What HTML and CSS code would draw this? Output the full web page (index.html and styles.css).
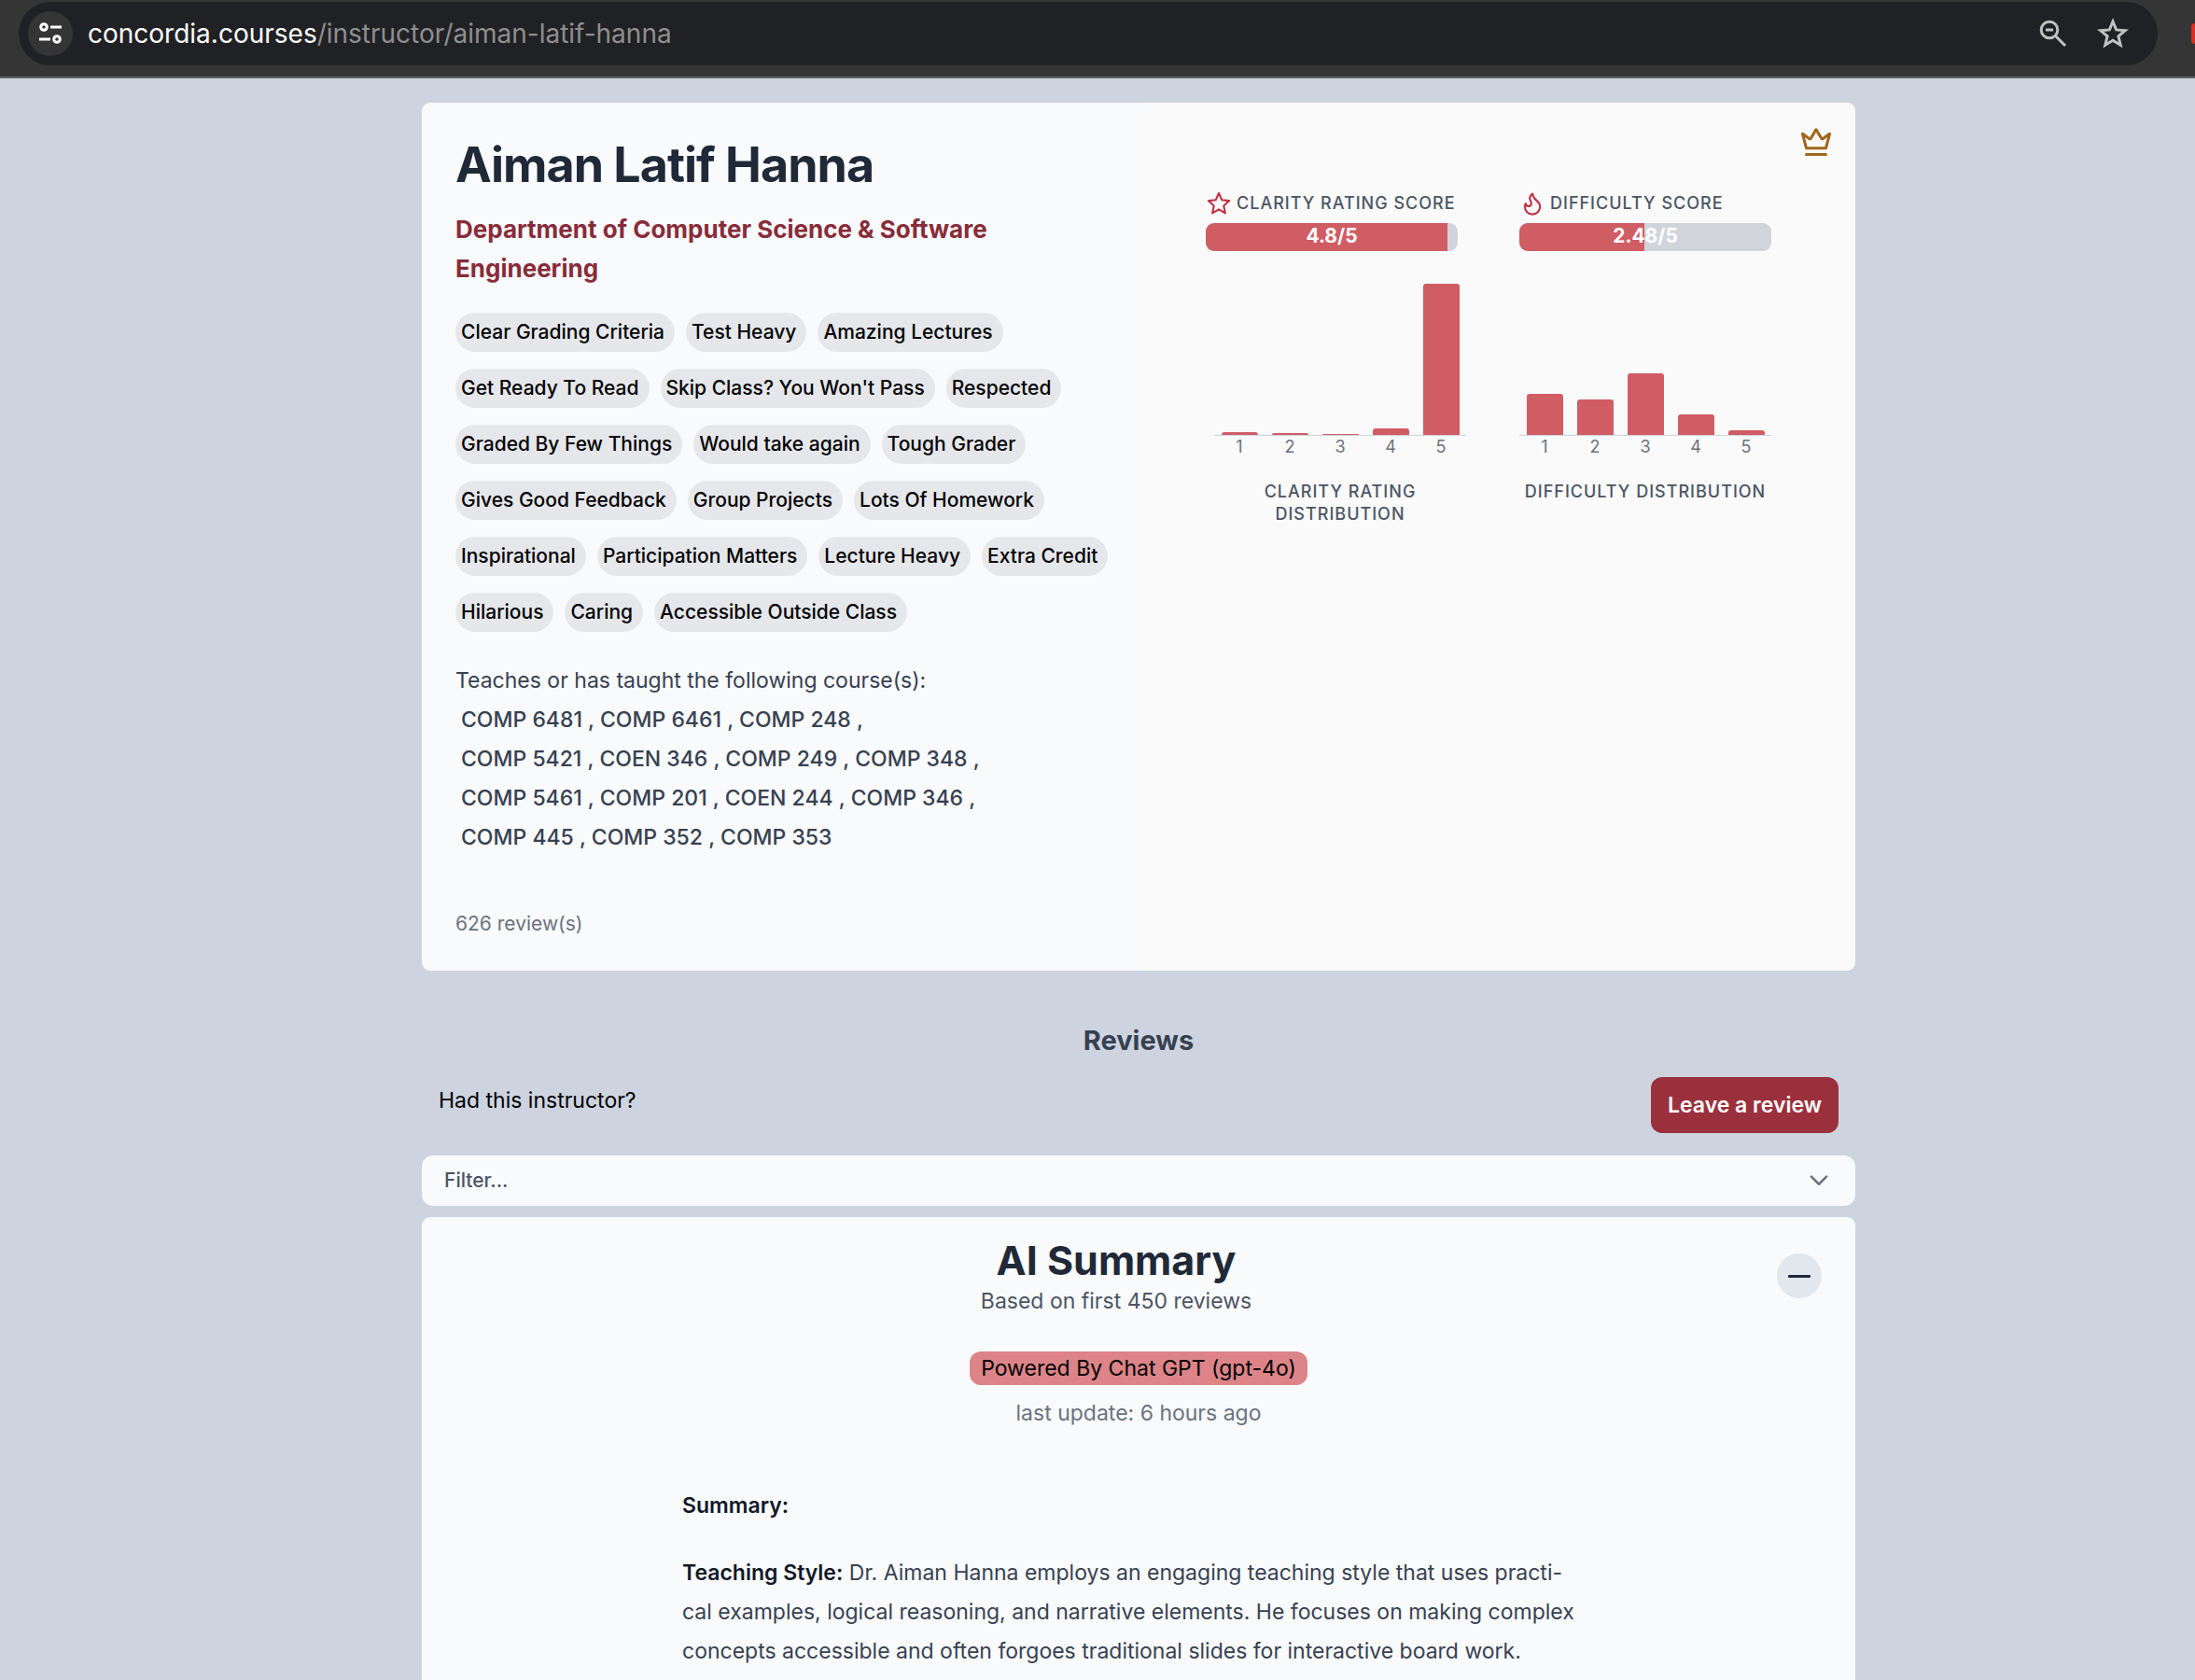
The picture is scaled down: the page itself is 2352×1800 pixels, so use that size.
FILE: index.html
```html
<!DOCTYPE html>
<html lang="en">
<head>
<meta charset="utf-8">
<title>Aiman Latif Hanna - concordia.courses</title>
<link rel="stylesheet" href="styles.css">
</head>
<body>
<header class="toolbar">
  <div class="omnibox">
    <button class="site-info" type="button" aria-label="Site information">
      <svg width="28" height="28" viewBox="0 0 28 28" fill="none" stroke="#fff" stroke-width="3"><circle cx="7" cy="7" r="3.3"/><path d="M14 7h12M2 20h12"/><circle cx="21" cy="20" r="3.3"/></svg>
    </button>
    <p class="url"><span class="url-host">concordia.courses</span>/instructor/aiman-latif-hanna</p>
    <button class="tool" type="button" aria-label="Zoom">
      <svg width="36" height="36" viewBox="0 0 36 36" fill="none" stroke="#c0c0c0" stroke-width="3"><circle cx="14" cy="14" r="8.8"/><path d="M20 20l11 11M10 14h8"/></svg>
    </button>
    <button class="tool" type="button" aria-label="Bookmark this page">
      <svg width="36" height="36" viewBox="0 0 36 36" fill="none" stroke="#c0c0c0" stroke-width="3"><path d="M18 5l3.6 8.9 9.6.8-7.3 6.2 2.3 9.3-8.2-5-8.2 5 2.3-9.3-7.3-6.2 9.6-.8z"/></svg>
    </button>
  </div>
  <div class="extension"></div>
</header>

<main class="page">
  <section class="card profile">
    <div class="about">
      <h1 class="name">Aiman Latif Hanna</h1>
      <p class="department">Department of Computer Science &amp; Software Engineering</p>
      <ul class="tags">
        <li>Clear Grading Criteria</li>
        <li>Test Heavy</li>
        <li>Amazing Lectures</li>
        <li>Get Ready To Read</li>
        <li>Skip Class? You Won't Pass</li>
        <li>Respected</li>
        <li>Graded By Few Things</li>
        <li>Would take again</li>
        <li>Tough Grader</li>
        <li>Gives Good Feedback</li>
        <li>Group Projects</li>
        <li>Lots Of Homework</li>
        <li>Inspirational</li>
        <li>Participation Matters</li>
        <li>Lecture Heavy</li>
        <li>Extra Credit</li>
        <li>Hilarious</li>
        <li>Caring</li>
        <li>Accessible Outside Class</li>
      </ul>
      <div class="courses">
        <p>Teaches or has taught the following course(s):</p>
        <p class="course-line"><a href="#">COMP 6481</a> , <a href="#">COMP 6461</a> , <a href="#">COMP 248</a> ,</p>
        <p class="course-line"><a href="#">COMP 5421</a> , <a href="#">COEN 346</a> , <a href="#">COMP 249</a> , <a href="#">COMP 348</a> ,</p>
        <p class="course-line"><a href="#">COMP 5461</a> , <a href="#">COMP 201</a> , <a href="#">COEN 244</a> , <a href="#">COMP 346</a> ,</p>
        <p class="course-line"><a href="#">COMP 445</a> , <a href="#">COMP 352</a> , <a href="#">COMP 353</a></p>
      </div>
      <p class="count">626 review(s)</p>
    </div>
    <div class="stats">
      <div class="crown">
        <svg width="36" height="36" viewBox="0 0 24 24" fill="none" stroke="#a1661c" stroke-width="2" stroke-linecap="round" stroke-linejoin="round"><path d="M2.300 6.200l4.700 3.500q.8.500 1.300-.300L12 3.200l3.700 6.200q.5.800 1.300.300l4.700-3.500L19 16.500H5z"/><path d="M5 21h14"/></svg>
      </div>
      <div class="metrics">
        <div class="metric">
          <h2 class="label"><svg width="28" height="28" viewBox="0 0 24 24" fill="none" stroke="#be3144" stroke-width="1.800" stroke-linejoin="round"><path d="M12 2.500l2.800 6.300 6.800.7-5.100 4.600 1.400 6.800L12 17.400l-5.900 3.500 1.400-6.800-5.100-4.600 6.800-.7z"/></svg>Clarity Rating Score</h2>
          <div class="meter"><div class="fill" style="width:96%"></div><span class="value">4.8/5</span></div>
          <div class="chart shifted">
            <div class="bars">
              <div class="bar" style="height:3px"></div><div class="bar" style="height:2px"></div><div class="bar" style="height:1px"></div><div class="bar" style="height:7px"></div><div class="bar" style="height:162px"></div>
            </div>
            <div class="ticks"><span>1</span><span>2</span><span>3</span><span>4</span><span>5</span></div>
            <p class="caption">Clarity Rating Distribution</p>
          </div>
        </div>
        <div class="metric">
          <h2 class="label"><svg width="28" height="28" viewBox="0 0 24 24" fill="none" stroke="#be3144" stroke-width="1.800" stroke-linecap="round" stroke-linejoin="round"><path d="M8.500 14.500A2.500 2.500 0 0 0 11 12c0-1.380-.5-2-1-3-1.072-2.143-.224-4.054 2-6 .5 2.500 2 4.900 4 6.500 2 1.600 3 3.500 3 5.500a7 7 0 1 1-14 0c0-1.153.433-2.294 1-3a2.500 2.500 0 0 0 2.500 2.500z"/></svg>Difficulty Score</h2>
          <div class="meter"><div class="fill" style="width:49.6%"></div><span class="value">2.48/5</span></div>
          <div class="chart">
            <div class="bars">
              <div class="bar" style="height:44px"></div><div class="bar" style="height:38px"></div><div class="bar" style="height:66px"></div><div class="bar" style="height:22px"></div><div class="bar" style="height:5px"></div>
            </div>
            <div class="ticks"><span>1</span><span>2</span><span>3</span><span>4</span><span>5</span></div>
            <p class="caption">Difficulty Distribution</p>
          </div>
        </div>
      </div>
    </div>
  </section>

  <h2 class="reviews-title">Reviews</h2>
  <div class="prompt">
    <p>Had this instructor?</p>
    <button class="leave" type="button">Leave a review</button>
  </div>
  <button class="filter" type="button">Filter...
    <svg width="30" height="30" viewBox="0 0 24 24" fill="none" stroke="#6b7280" stroke-width="2" stroke-linecap="round" stroke-linejoin="round"><path d="M5.500 8.500l6.500 6.500 6.500-6.500"/></svg>
  </button>

  <section class="card summary">
    <div class="summary-head">
      <div class="summary-title">
        <h2>AI Summary</h2>
        <p>Based on first 450 reviews</p>
      </div>
      <button class="collapse" type="button" aria-label="Collapse summary">
        <svg width="24" height="3" viewBox="0 0 24 3"><rect width="24" height="3" rx="1" fill="#1f2937"/></svg>
      </button>
    </div>
    <p class="powered">Powered By Chat GPT (gpt-4o)</p>
    <p class="updated">last update: 6 hours ago</p>
    <div class="summary-text">
      <p><strong>Summary:</strong></p>
      <p><strong>Teaching Style:</strong> Dr. Aiman Hanna employs an engaging teaching style that uses practi-<br>cal examples, logical reasoning, and narrative elements. He focuses on making complex<br>concepts accessible and often forgoes traditional slides for interactive board work.</p>
    </div>
  </section>
</main>
</body>
</html>
```
FILE: styles.css
```css
* { box-sizing: border-box; }
html { scrollbar-width: none; }
body, h1, h2, p, ul { margin: 0; padding: 0; }
body {
  min-height: 100vh;
  background: #cdd4e0;
  color: #000;
  font: 23px/36px Inter, "Liberation Sans", sans-serif;
}
button { border: 0; padding: 0; background: none; color: inherit; font: inherit; cursor: pointer; }
svg { display: block; flex: none; }
a { color: inherit; text-decoration: none; }

.toolbar {
  display: flex;
  align-items: center;
  gap: 36px;
  height: 84px;
  padding: 2px 0 12px 20px;
  background: #353535;
  border-bottom: 2px solid #626264;
  overflow: hidden;
}
.omnibox {
  flex: 1;
  display: flex;
  align-items: center;
  gap: 28px;
  height: 68px;
  padding: 0 30px 0 10px;
  border-radius: 34px;
  background: #202124;
}
.site-info { display: grid; place-items: center; width: 48px; height: 48px; border-radius: 50%; background: #353535; }
.url { flex: 1; margin-left: -12px; color: #8f8f8f; font-size: 28px; white-space: nowrap; }
.url-host { color: #fff; }
.extension { width: 4px; height: 22px; border-radius: 6px 0 0 6px; background: #d93025; }

.page { max-width: 1624px; margin: 0 auto; padding: 26px 0 0 88px; }
.card { border-radius: 9px; background: #f9fafc; }

.profile { display: grid; grid-template-columns: 1fr 1fr; min-height: 930px; }
.about { padding: 37px 18px 35px 36px; display: flex; flex-direction: column; }
.name { color: #1f2937; font-size: 52px; line-height: 60px; font-weight: 700; letter-spacing: -1px; }
.department { max-width: 600px; margin-top: 18px; color: #882c3a; font-size: 26px; line-height: 42px; font-weight: 700; }
.tags { display: flex; flex-wrap: wrap; gap: 18px 12px; margin-top: 26px; list-style: none; }
.tags li { padding: 0 11px 0 6px; border-radius: 21px; background: #e5e7eb; font-size: 21px; line-height: 42px; font-weight: 500; }
.courses { margin-top: 31px; color: #374151; line-height: 42px; }
.course-line { padding-left: 6px; font-weight: 500; white-space: nowrap; }
.count { margin-top: auto; color: #6b7280; font-size: 21px; line-height: 30px; }

.stats { padding: 24px; border-radius: 9px; background: #fafafa; }
.crown { display: flex; justify-content: flex-end; }
.metrics { display: flex; gap: 66px; margin-top: 33px; padding-left: 48px; }
.metric { width: 270px; }
.label, .caption { color: #4b5563; font-size: 18px; line-height: 24px; font-weight: 500; letter-spacing: 1px; text-transform: uppercase; }
.label { display: flex; align-items: center; gap: 5px; height: 30px; white-space: nowrap; }
.meter { position: relative; height: 30px; margin-top: 6px; border-radius: 9px; background: #d1d5db; overflow: hidden; }
.fill { height: 100%; background: #d05c64; }
.value { position: absolute; inset: 0; color: #fff; font-size: 21px; line-height: 27px; font-weight: 700; text-align: center; }
.chart { margin-top: 34px; }
.shifted { margin-left: 9px; margin-right: -9px; }
.bars { display: flex; align-items: flex-end; gap: 15px; height: 164px; padding: 0 7px 0 8px; border-bottom: 1px solid #d1d5db; }
.bar { flex: 1; border-radius: 3px 3px 0 0; background: #d05c64; }
.ticks { display: flex; color: #6b7280; font-size: 18px; line-height: 24px; }
.ticks span { flex: 1; text-align: center; }
.caption { margin-top: 24px; text-align: center; }

.reviews-title { margin-top: 54px; color: #374151; font-size: 29px; line-height: 42px; font-weight: 700; text-align: center; }
.prompt { display: flex; justify-content: space-between; padding: 18px 18px 24px; }
.prompt p { padding-top: 7px; }
.leave { height: 60px; padding: 0 18px; border-radius: 12px; background: #9b303d; color: #fff; font-weight: 600; }
.filter { display: flex; align-items: center; justify-content: space-between; width: 100%; height: 54px; padding: 0 24px; border-radius: 12px; background: #f9fafc; color: #4b5563; font-size: 21px; font-weight: 500; }

.summary { margin-top: 12px; padding: 24px 36px 36px; }
.summary-head { display: flex; justify-content: space-between; }
.summary-title { flex: 1; text-align: center; }
.summary-title h2 { color: #1f2937; font-size: 43px; line-height: 44px; font-weight: 700; }
.summary-title p { margin-top: 4px; color: #4b5563; }
.collapse { display: grid; place-items: center; width: 48px; height: 48px; margin-top: 15px; border-radius: 50%; background: #e2e6ed; }
.powered { width: max-content; margin: 36px auto 0; padding: 0 12px; border-radius: 12px; background: #dc8488; }
.updated { margin-top: 12px; color: #6b7280; text-align: center; }
.summary-text { max-width: 978px; margin: 60px auto 0; color: #374151; line-height: 42px; }
.summary-text p + p { margin-top: 30px; }
.summary-text strong { color: #111827; font-weight: 600; }
```
